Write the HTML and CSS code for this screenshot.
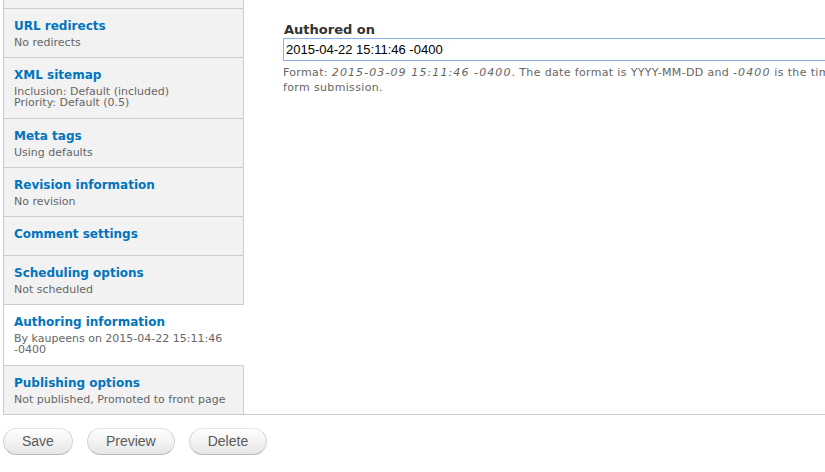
FILE: index.html
```html
<!DOCTYPE html>
<html lang="en">
<head>
<meta charset="utf-8">
<title>Edit content</title>
<link rel="stylesheet" href="styles.css">
</head>
<body>
<div class="vtabs">
  <ul class="vtabs-list">
    <li class="vtab vtab-stub"></li>
    <li class="vtab"><a class="vtab-title" href="#">URL redirects</a><span class="vtab-summary">No redirects</span></li>
    <li class="vtab"><a class="vtab-title" href="#">XML sitemap</a><span class="vtab-summary">Inclusion: Default (included)<br>Priority: Default (0.5)</span></li>
    <li class="vtab"><a class="vtab-title" href="#">Meta tags</a><span class="vtab-summary">Using defaults</span></li>
    <li class="vtab"><a class="vtab-title" href="#">Revision information</a><span class="vtab-summary">No revision</span></li>
    <li class="vtab vtab-nosummary"><a class="vtab-title" href="#">Comment settings</a></li>
    <li class="vtab"><a class="vtab-title" href="#">Scheduling options</a><span class="vtab-summary">Not scheduled</span></li>
    <li class="vtab vtab-active"><a class="vtab-title" href="#">Authoring information</a><span class="vtab-summary">By kaupeens on 2015-04-22 15:11:46 -0400</span></li>
    <li class="vtab vtab-last"><a class="vtab-title" href="#">Publishing options</a><span class="vtab-summary">Not published, Promoted to front page</span></li>
  </ul>
  <div class="vtabs-pane">
    <label class="field-label" for="authored">Authored on</label>
    <input class="field-input" id="authored" type="text" value="2015-04-22 15:11:46 -0400">
    <div class="field-desc">Format: <em>2015-03-09 15:11:46 -0400</em>. The date format is YYYY-MM-DD and <em>-0400</em> is the time zone offset from UTC. Leave blank to use the time of<br>form submission.</div>
  </div>
</div>
<div class="actions">
  <button class="btn" type="button">Save</button>
  <button class="btn" type="button">Preview</button>
  <button class="btn" type="button">Delete</button>
</div>
</body>
</html>
```

FILE: styles.css
```css
html, body {
  margin: 0;
  padding: 0;
  background: #fff;
  overflow: hidden;
}

body {
  font-family: "DejaVu Sans", Verdana, sans-serif;
  color: #333;
}

.vtabs {
  display: flex;
  margin-left: 3px;
  border-left: 1px solid #ccc;
  border-bottom: 1px solid #ccc;
}

.vtabs-list {
  list-style: none;
  margin: 0;
  padding: 0;
  width: 240px;
  flex: 0 0 240px;
}

.vtab {
  display: flex;
  flex-direction: column;
  box-sizing: border-box;
  padding: 10px 10px 9.3px 10px;
  background: #f2f2f2;
  border-right: 1px solid #ccc;
  border-bottom: 1px solid #ccc;
}

.vtab-stub {
  height: 9px;
  padding: 0;
}

.vtab-nosummary {
  padding-bottom: 14px;
}

.vtab-active {
  background: #fff;
  border-right-color: transparent;
}

.vtab-last {
  border-bottom: none;
}

.vtab-title {
  font-size: 12px;
  line-height: 14px;
  font-weight: bold;
  color: #0074bd;
  text-decoration: none;
}

.vtab-summary {
  margin-top: 4px;
  font-size: 11px;
  line-height: 11px;
  color: #666;
}

.vtabs-pane {
  flex: 1 1 auto;
  min-width: 0;
  overflow: hidden;
  padding: 22px 0 0 39px;
}

.field-label {
  display: block;
  margin-left: 1px;
  font-size: 13px;
  line-height: 15px;
  font-weight: bold;
  color: #333;
}

.field-input {
  display: block;
  box-sizing: border-box;
  width: 800px;
  height: 23px;
  margin: 1px 0 0 0;
  padding: 2px 2px;
  border: 1px solid #86b3ec;
  border-radius: 0;
  outline: none;
  font-family: "Liberation Sans", Arial, sans-serif;
  font-size: 13px;
  color: #000;
  background: #fff;
}

.field-desc {
  margin: 4px 0 0 0;
  white-space: nowrap;
  font-size: 11px;
  line-height: 15px;
  letter-spacing: 0.35px;
  color: #666;
}

.field-desc em {
  font-style: italic;
  letter-spacing: 1.1px;
}

.actions {
  display: flex;
  gap: 14px;
  margin: 13px 0 0 3px;
}

.btn {
  box-sizing: border-box;
  height: 27px;
  margin: 0;
  padding: 4px 18px;
  border: 1px solid #d2d2d2;
  border-top-color: #e4e4e4;
  border-bottom-color: #b8b8b8;
  border-radius: 20px;
  background: linear-gradient(#ffffff, #f3f3f3 50%, #e6e6e6);
  font-family: "Liberation Sans", Arial, sans-serif;
  font-size: 14px;
  line-height: 17px;
  color: #5a5a5a;
  cursor: pointer;
}
```
